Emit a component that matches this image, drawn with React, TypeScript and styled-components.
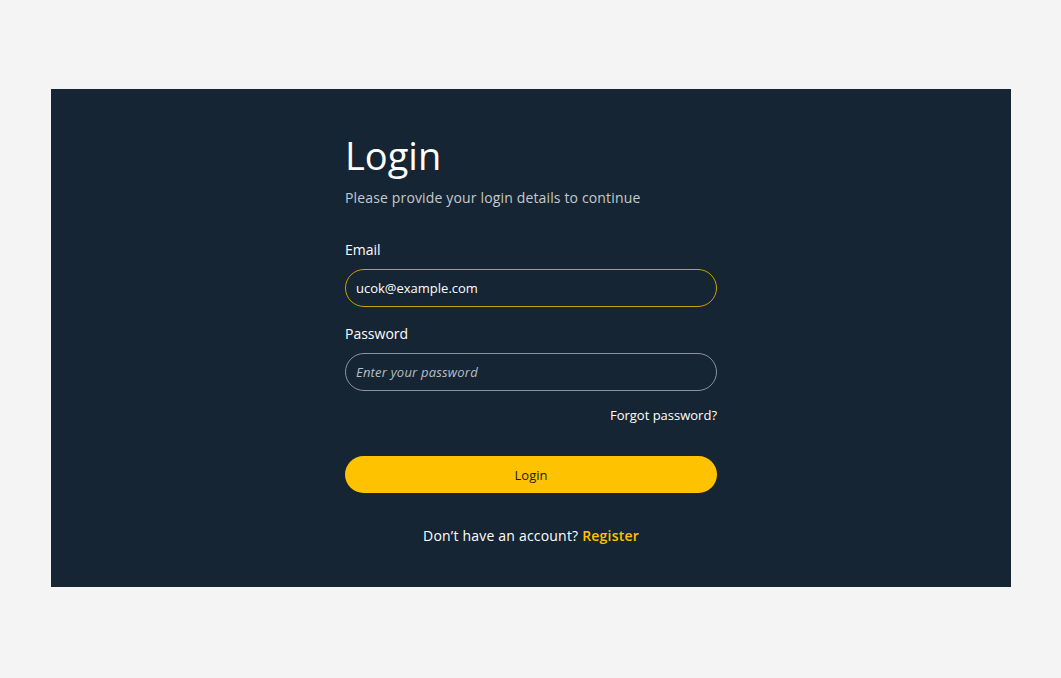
import React from "react";
import styled, { createGlobalStyle } from "styled-components";

const Global = createGlobalStyle`
  html, body { margin: 0; padding: 0; background: #f4f4f4; }
  body { font-family: "Open Sans", "Liberation Sans", sans-serif; }
  * { box-sizing: border-box; }
`;

const Page = styled.div`
  width: 1061px;
  height: 678px;
  padding: 89px 50px 0 51px;
  background: #f4f4f4;
`;

const Panel = styled.section`
  width: 960px;
  height: 498px;
  background: #162533;
  display: flex;
  justify-content: center;
  padding-top: 40px;
`;

const Form = styled.form`
  width: 372px;
  display: flex;
  flex-direction: column;
`;

const Title = styled.h1`
  margin: 0;
  font-size: 38px;
  font-weight: 400;
  line-height: 52px;
  color: #ffffff;
`;

const Subtitle = styled.p`
  margin: 7px 0 0;
  font-size: 14px;
  letter-spacing: 0.15px;
  line-height: 20px;
  color: #c5cad0;
`;

const Label = styled.label<{ $top: number }>`
  margin-top: ${(p) => p.$top}px;
  font-size: 14px;
  line-height: 20px;
  color: #ffffff;
`;

const Input = styled.input<{ $focus?: boolean }>`
  margin-top: 9px;
  height: 38px;
  width: 100%;
  border-radius: 19px;
  border: 1px solid ${(p) => (p.$focus ? "#c9a300" : "#8a949d")};
  background: transparent;
  padding: 0 10px;
  font-family: inherit;
  font-size: 13px;
  color: #ffffff;
  outline: none;
  &::placeholder {
    color: #b9bfc5;
    font-style: italic;
    letter-spacing: 0.2px;
  }
`;

const Forgot = styled.a`
  align-self: flex-end;
  margin-top: 14px;
  font-size: 13px;
  line-height: 20px;
  color: #ffffff;
  text-decoration: none;
`;

const Button = styled.button`
  margin-top: 31px;
  height: 37px;
  width: 100%;
  border: none;
  border-radius: 19px;
  background: #ffc200;
  font-family: inherit;
  font-size: 13px;
  color: #1b1b1b;
`;

const Footer = styled.p`
  margin: 33px 0 0;
  text-align: center;
  font-size: 14px;
  letter-spacing: 0.2px;
  line-height: 20px;
  color: #ffffff;
`;

const Register = styled.a`
  color: #ffc200;
  font-weight: 600;
  text-decoration: none;
`;

export default function App() {
  return (
    <>
      <Global />
      <Page>
        <Panel>
          <Form onSubmit={(e) => e.preventDefault()}>
            <Title>Login</Title>
            <Subtitle>Please provide your login details to continue</Subtitle>
            <Label $top={32}>Email</Label>
            <Input $focus defaultValue="ucok@example.com" />
            <Label $top={17}>Password</Label>
            <Input type="password" placeholder="Enter your password" />
            <Forgot href="#">Forgot password?</Forgot>
            <Button type="submit">Login</Button>
            <Footer>
              Don’t have an account? <Register href="#">Register</Register>
            </Footer>
          </Form>
        </Panel>
      </Page>
    </>
  );
}
